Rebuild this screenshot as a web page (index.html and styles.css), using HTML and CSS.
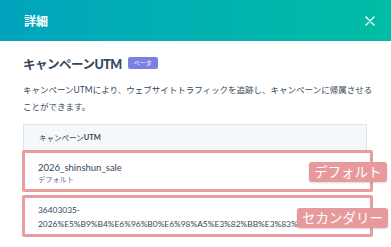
FILE: index.html
```html
<!DOCTYPE html>
<html lang="ja">
<head>
  <meta charset="UTF-8" />
  <title>詳細</title>
  <link rel="stylesheet" href="styles.css">
</head>
<body>
  <div class="panel">
    <div class="header">
      <span class="title">詳細</span>
      <svg class="close" width="10" height="10" viewBox="0 0 10 10">
        <path d="M1 1 L9 9 M9 1 L1 9" stroke="#fff" stroke-width="1.4" stroke-linecap="round" />
      </svg>
    </div>

    <div class="content">
      <div class="heading">
        <span>キャンペーン<b>UTM</b></span>
        <span class="badge">ベータ</span>
      </div>
      <p class="desc">キャンペーンUTMにより、ウェブサイトトラフィックを追跡し、キャンペーンに帰属させることができます。</p>

      <div class="table">
        <div class="table-head">キャンペーン<b>UTM</b></div>
        <div class="row row-default">
          <div class="utm">2026_shinshun_sale</div>
          <div class="sub">デフォルト</div>
          <div class="mark"></div>
          <div class="tag tag-default">デフォルト</div>
        </div>
        <div class="row row-secondary">
          <div class="utm long">36403035-<br>2026%E5%B9%B4%E6%96%B0%E6%98%A5%E3%82%BB%E3%83%BC%E3%83%AB</div>
          <div class="mark"></div>
          <div class="tag tag-secondary">セカンダリー</div>
        </div>
      </div>
    </div>
  </div>
</body>
</html>
```

FILE: styles.css
```css
* {
  margin: 0;
  padding: 0;
  box-sizing: border-box;
}

body {
  background-color: white;
  font-family: Lato, "Noto Sans CJK JP", sans-serif;
  color: #33475b;
  overflow: hidden;
}

.panel {
  width: 391px;
  height: 247px;
  overflow: hidden;
}

.header {
  height: 41px;
  background: linear-gradient(to right, #00a4bd, #00bda5);
  display: flex;
  align-items: center;
  justify-content: space-between;
  padding: 0 16px 0 24px;
  color: white;
}

.title {
  font-size: 12px;
  font-weight: bold;
}

.content {
  padding: 12px 24px 0 23px;
}

.heading {
  display: flex;
  align-items: center;
  gap: 6px;
  font-size: 12.5px;
  letter-spacing: -0.5px;
  font-weight: bold;
  height: 20px;
}

.badge {
  background-color: #7c7fe2;
  color: white;
  font-size: 6px;
  letter-spacing: 0;
  font-weight: normal;
  padding: 2px 6px;
  border-radius: 2px;
  line-height: 8px;
}

.desc {
  font-size: 8.5px;
  line-height: 17px;
  margin-top: 9px;
  width: 352px;
}

.table {
  margin-top: 8px;
  width: 344px;
}

.table-head {
  background-color: #f5f8fa;
  border: 1px solid #dfe3eb;
  height: 27px;
  display: flex;
  align-items: center;
  padding-left: 15px;
  font-size: 7.5px;
}

.row {
  position: relative;
  padding-left: 15px;
}

.row-default {
  height: 42px;
  padding-top: 10px;
}

.row-secondary {
  height: 46px;
  padding-top: 10px;
}

.utm {
  font-size: 9.5px;
  line-height: 13px;
  white-space: nowrap;
}

.long {
  font-size: 8.4px;
  line-height: 14px;
  width: 260px;
  overflow: hidden;
}

.sub {
  font-size: 7.2px;
  line-height: 11px;
  color: #516f90;
}

.mark {
  position: absolute;
  border: 3px solid rgba(230, 140, 142, 0.85);
  border-radius: 2px;
  left: -1px;
  right: -6px;
}

.row-default .mark {
  top: -1px;
  bottom: 1px;
}

.row-secondary .mark {
  top: 2px;
  bottom: 2px;
}

.tag {
  position: absolute;
  background-color: #e8999b;
  color: white;
  font-size: 13.5px;
  line-height: 20px;
  padding: 0 5px;
  border-radius: 3px;
  white-space: nowrap;
  box-shadow: 0 1px 2px rgba(0, 0, 0, 0.15);
}

.tag-default {
  top: 11px;
  left: 286px;
}

.tag-secondary {
  top: 15px;
  left: 274px;
}
```
